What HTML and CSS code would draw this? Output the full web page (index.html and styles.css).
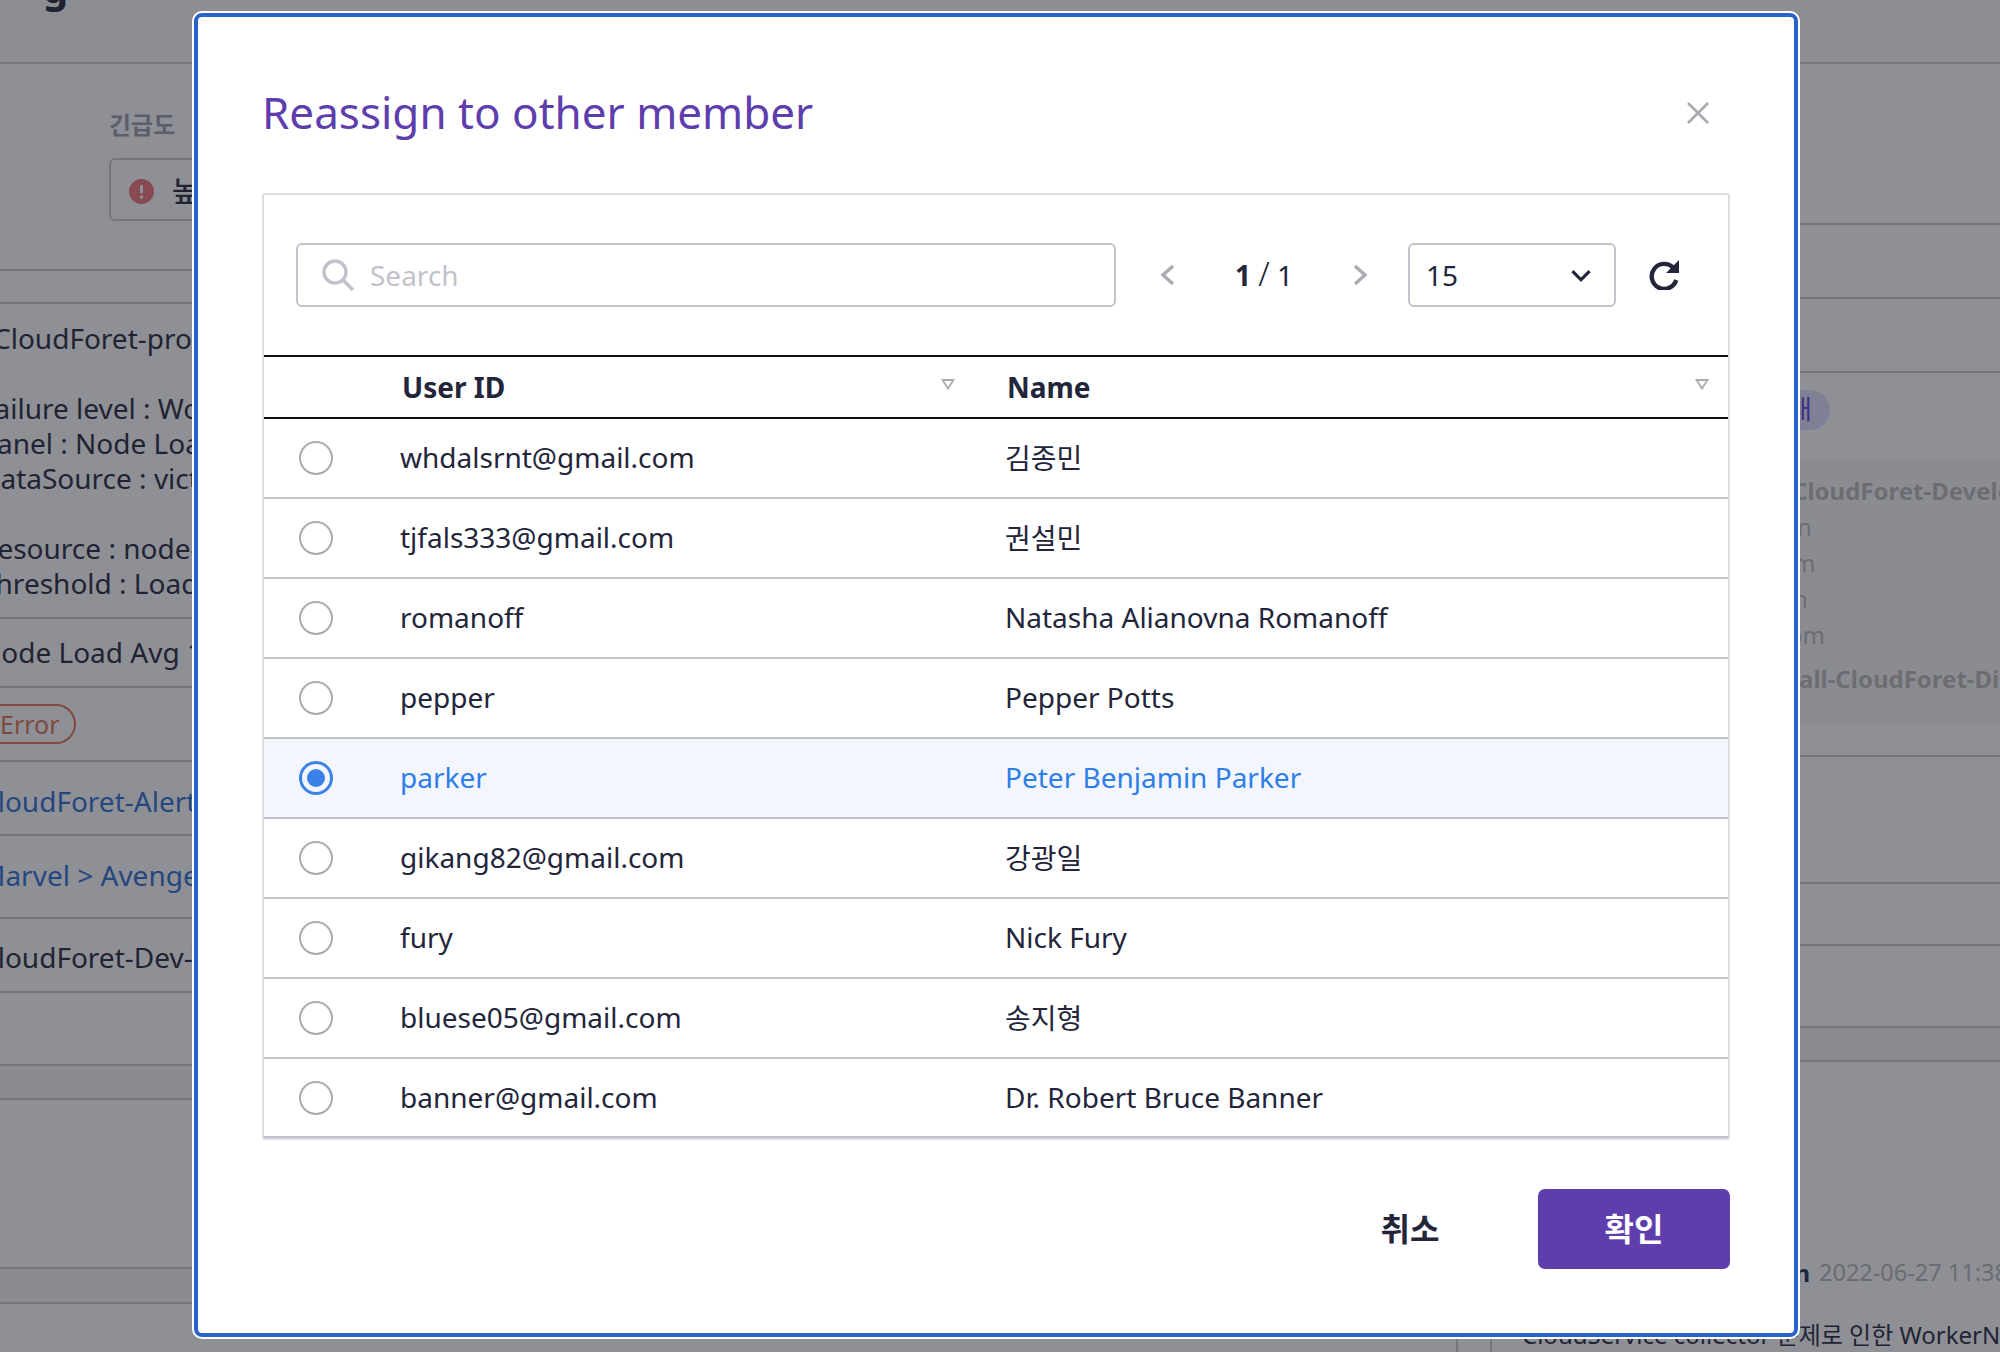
FILE: index.html
```html
<!DOCTYPE html>
<html lang="ko">
<head>
<meta charset="utf-8">
<title>Reassign to other member</title>
<link rel="stylesheet" href="styles.css">
</head>
<body>
<div class="page">
  <header class="page-head">
    <span class="head-g">g</span>
    <span class="head-rest">CloudForet Node Load 1m alert</span>
  </header>
  <div class="page-body">
    <section class="left">
      <div class="urgency">
        <div class="urgency-label">긴급도</div>
        <div class="urgency-box">
          <svg class="urgency-icon" viewBox="0 0 25 25"><circle cx="12.5" cy="12.5" r="12.5" fill="#ee737b"/><rect x="11" y="6" width="3" height="8.5" rx="1.2" fill="#fff"/><circle cx="12.5" cy="18" r="1.7" fill="#fff"/></svg>
          <span class="urgency-text">높음</span>
        </div>
      </div>
      <div class="band band-a"></div>
      <div class="row desc">
        <p class="first">CloudForet-prod</p>
        <p>&nbsp;</p>
        <p class="in">Failure level : Worker</p>
        <p class="in">Panel : Node Load Avg</p>
        <p class="in">DataSource : victoria</p>
        <p>&nbsp;</p>
        <p class="in">Resource : node-exporter</p>
        <p class="in">Threshold : Load Avg</p>
      </div>
      <div class="row r-node in">Node Load Avg 1m</div>
      <div class="row r-error"><span class="badge">Error</span></div>
      <div class="row r-alert in link">CloudForet-Alert</div>
      <div class="row r-marvel in link">Marvel &gt; Avengers</div>
      <div class="row r-dev in">CloudForet-Dev-Team</div>
      <div class="row r-empty"></div>
      <div class="band band-b"></div>
      <div class="row r-tall"></div>
      <div class="band band-c"></div>
    </section>
    <div class="gutter"></div>
    <section class="right">
      <div class="row-r h161"></div>
      <div class="row-r h74"></div>
      <div class="row-r h74"></div>
      <div class="row-r h384">
        <div class="pill">대</div>
        <div class="panel">
          <div class="panel-bold">CloudForet-Develop</div>
          <div class="frag f1">n</div>
          <div class="frag f2">m</div>
          <div class="frag f3">n</div>
          <div class="frag f4">om</div>
          <div class="panel-bold alt">all-CloudForet-Di</div>
        </div>
      </div>
      <div class="row-r h127"></div>
      <div class="row-r h62"></div>
      <div class="row-r h82"></div>
      <div class="band-r"></div>
      <div class="comment">
        <div class="comment-head"><span class="comment-name">admin</span><span class="comment-date">2022-06-27 11:38:00</span></div>
        <div class="comment-body">CloudService collector 문제로 인한 WorkerNode</div>
      </div>
    </section>
  </div>
</div>
<div class="scrim"></div>
<div class="modal" role="dialog">
  <div class="modal-head">
    <h2 class="modal-title">Reassign to other member</h2>
    <svg class="close" viewBox="0 0 24 24"><path d="M2 2 22 22M22 2 2 22" fill="none" stroke="#a9abb3" stroke-width="2.6"/></svg>
  </div>
  <div class="table-box">
    <div class="toolbar">
      <div class="search">
        <svg class="search-icon" viewBox="0 0 32 32"><circle cx="13" cy="13" r="11" fill="none" stroke="#c1c2ca" stroke-width="3.4"/><path d="M21 21 31 31" stroke="#c1c2ca" stroke-width="3.6" fill="none"/></svg>
        <span class="search-text">Search</span>
      </div>
      <div class="pager">
        <svg class="chev" viewBox="0 0 24 24"><path d="M17 3 7 12 17 21" fill="none" stroke="#a9abb3" stroke-width="3.4"/></svg>
        <div class="pager-text"><b>1</b> <span class="slash">/</span> 1</div>
        <svg class="chev" viewBox="0 0 24 24"><path d="M7 3 17 12 7 21" fill="none" stroke="#a9abb3" stroke-width="3.4"/></svg>
      </div>
      <div class="select">
        <span>15</span>
        <svg class="select-chev" viewBox="0 0 20 14"><path d="M2 3 10 11 18 3" fill="none" stroke="#23253a" stroke-width="3"/></svg>
      </div>
      <svg class="refresh" viewBox="0 0 30 30"><path d="M24.5 8A12.5 12.5 0 1 0 27.2 20" fill="none" stroke="#23253a" stroke-width="4.4"/><path d="M30 0V13H17Z" fill="#23253a"/></svg>
    </div>
    <div class="thead">
      <div></div>
      <div class="th"><span>User ID</span><svg class="sort" viewBox="0 0 14 11"><path d="M1.5 1H12.500L7 9.500Z" fill="none" stroke="#a9abb3" stroke-width="1.8"/></svg></div>
      <div class="th th-name"><span>Name</span><svg class="sort" viewBox="0 0 14 11"><path d="M1.5 1H12.500L7 9.500Z" fill="none" stroke="#a9abb3" stroke-width="1.8"/></svg></div>
    </div>
    <div class="tr"><div class="cell-radio"><i class="radio"></i></div><div class="cell">whdalsrnt@gmail.com</div><div class="cell">김종민</div></div>
    <div class="tr"><div class="cell-radio"><i class="radio"></i></div><div class="cell">tjfals333@gmail.com</div><div class="cell">권설민</div></div>
    <div class="tr"><div class="cell-radio"><i class="radio"></i></div><div class="cell">romanoff</div><div class="cell">Natasha Alianovna Romanoff</div></div>
    <div class="tr"><div class="cell-radio"><i class="radio"></i></div><div class="cell">pepper</div><div class="cell">Pepper Potts</div></div>
    <div class="tr selected"><div class="cell-radio"><i class="radio on"></i></div><div class="cell">parker</div><div class="cell">Peter Benjamin Parker</div></div>
    <div class="tr"><div class="cell-radio"><i class="radio"></i></div><div class="cell">gikang82@gmail.com</div><div class="cell">강광일</div></div>
    <div class="tr"><div class="cell-radio"><i class="radio"></i></div><div class="cell">fury</div><div class="cell">Nick Fury</div></div>
    <div class="tr"><div class="cell-radio"><i class="radio"></i></div><div class="cell">bluese05@gmail.com</div><div class="cell">송지형</div></div>
    <div class="tr last"><div class="cell-radio"><i class="radio"></i></div><div class="cell">banner@gmail.com</div><div class="cell">Dr. Robert Bruce Banner</div></div>
  </div>
  <div class="modal-foot">
    <button class="btn cancel">취소</button>
    <button class="btn confirm">확인</button>
  </div>
</div>
</body>
</html>
```
FILE: styles.css
```css
* { box-sizing: border-box; }
html, body { margin: 0; padding: 0; height: 100%; }
body {
  width: 2000px; height: 1352px; overflow: hidden; position: relative;
  background: #fff; color: #23253a;
  font-family: "Noto Sans", "Noto Sans CJK KR", sans-serif; font-size: 28px;
}
.page { width: 2000px; height: 1352px; overflow: hidden; display: flex; flex-direction: column; }
.page-head {
  height: 64px; flex: none; overflow: hidden; display: flex; align-items: flex-end;
  background: #fafafb; border-bottom: 2px solid #c8c9cf; padding-left: 43px;
}
.head-g { font-size: 40px; font-weight: 700; line-height: 40px; margin-bottom: 54px; }
.head-rest { font-size: 40px; line-height: 40px; margin-bottom: 57px; margin-left: 182px; white-space: nowrap; font-weight: 700; }
.page-body { flex: 1; display: flex; min-height: 0; }
.left { width: 1456px; flex: none; overflow: hidden; }
.urgency { height: 207px; padding: 44px 0 0 109px; border-bottom: 2px solid #c8c9cf; }
.urgency-label { font-size: 24px; line-height: 34px; font-weight: 700; color: #999bad; margin-bottom: 16px; }
.urgency-box { width: 400px; height: 63px; display: flex; align-items: center; padding-left: 18px; border: 2px solid #c8c9cf; border-radius: 6px; }
.urgency-icon { width: 25px; height: 25px; margin: 4px 18px 0 0; }
.urgency-text { font-weight: 500; }
.band { background: #f7f7f9; border-bottom: 2px solid #c8c9cf; }
.band-a { height: 33px; background: #fff; }
.band-b { height: 34px; }
.band-c { height: 35px; }
.row { display: flex; align-items: center; border-bottom: 2px solid #c8c9cf; white-space: nowrap; }
.row.in, .desc .in { text-indent: -20px; }
.desc { display: block; height: 315px; padding-top: 17px; line-height: 35px; }
.desc p { margin: 0; }
.desc .first { text-indent: -7px; }
.r-node { height: 69px; padding-bottom: 2px; }
.r-error { height: 74px; }
.r-alert { height: 74px; padding-top: 5px; }
.r-marvel { height: 83px; padding-bottom: 3px; }
.r-dev { height: 74px; padding-top: 4px; }
.r-empty { height: 73px; }
.r-tall { height: 169px; }
.link { color: #2b6dd3; }
.badge { height: 40px; display: flex; align-items: center; margin-left: -20px; padding: 0 14px 0 18px; border: 2px solid #dd7252; border-radius: 20px; color: #dd7252; font-size: 25px; }
.gutter { width: 34px; flex: none; border-left: 2px solid #c8c9cf; }
.right { flex: 1; border-left: 2px solid #c8c9cf; overflow: hidden; white-space: nowrap; }
.row-r { border-bottom: 2px solid #c8c9cf; }
.h161 { height: 161px; }
.h74 { height: 74px; }
.h384 { height: 384px; padding-top: 17px; }
.h127 { height: 127px; }
.h62 { height: 62px; }
.h82 { height: 82px; }
.pill { width: 200px; height: 40px; margin-left: 138px; padding-right: 18px; text-align: right; line-height: 38px; border-radius: 20px; background: #dfddff; color: #5b3dd5; font-size: 26px; }
.panel { margin-top: 28px; height: 265px; background: #f7f7f9; padding-top: 15px; font-size: 24px; line-height: 36px; color: #b9b8bb; }
.panel-bold { font-weight: 700; margin-left: 300px; }
.panel-bold.alt { margin-left: 307px; margin-top: 8px; }
.f1 { margin-left: 305px; }
.f2 { margin-left: 301px; }
.f3 { margin-left: 301px; }
.f4 { margin-left: 296px; }
.band-r { height: 34px; background: #f7f7f9; border-bottom: 2px solid #c8c9cf; }
.comment { padding: 192px 0 0 30px; }
.comment-head { display: flex; align-items: center; height: 36px; font-size: 24px; }
.comment-name { flex: none; width: 288px; text-align: right; font-weight: 700; color: #1a2d58; }
.comment-date { flex: none; margin-left: 9px; color: #b5b6bb; font-size: 23.5px; }
.comment-body { margin-top: 25px; line-height: 40px; font-size: 24px; }
.scrim { position: absolute; inset: 0; background: rgba(31, 33, 43, .5); }
.modal {
  position: absolute; left: 194px; top: 13px; width: 1604px; height: 1324px;
  background: #fff; border: 4px solid #2864c8; border-radius: 8px; box-shadow: 0 0 0 2px #fff;
  padding: 0 64px;
}
.modal-head { height: 176px; padding-top: 65px; display: flex; justify-content: space-between; }
.modal-title { margin: 0; font-size: 44px; line-height: 60px; font-weight: 400; color: #5e3dad; }
.close { width: 24px; height: 24px; margin: 19px 20px 0 0; }
.table-box { width: 1468px; height: 947px; border: 2px solid #dcdde2; border-radius: 3px; }
.toolbar { height: 160px; display: flex; align-items: center; padding: 0 0 0 32px; }
.search { width: 820px; height: 64px; display: flex; align-items: center; border: 2px solid #c1c2ca; border-radius: 6px; padding-left: 24px; }
.search-icon { width: 32px; height: 32px; margin-right: 16px; }
.search-text { color: #c1c2ca; }
.pager { display: flex; align-items: center; margin: 0 36px 0 40px; }
.chev { width: 24px; height: 24px; }
.pager-text { width: 168px; text-align: center; line-height: 34px; }
.slash { font-size: 33px; font-weight: 300; line-height: 28px; }
.select { width: 208px; height: 64px; display: flex; align-items: center; justify-content: space-between; border: 2px solid #c1c2ca; border-radius: 6px; padding: 0 22px 0 16px; }
.select-chev { width: 22px; height: 15px; }
.refresh { width: 30px; height: 30px; margin-left: 33px; }
.thead, .tr { display: grid; grid-template-columns: 136px 605px 1fr; align-items: center; }
.thead { height: 64px; border-top: 2px solid #0e0e14; border-bottom: 2px solid #0e0e14; font-weight: 700; }
.th { display: flex; justify-content: space-between; align-items: center; padding-left: 2px; padding-right: 50px; }
.th-name { padding-left: 2px; padding-right: 19px; }
.sort { width: 14px; height: 11px; margin-top: -6px; }
.tr { height: 80px; border-bottom: 2px solid #c1c2ca; }
.tr.last { height: 79px; }
.cell { padding-bottom: 2px; }
.cell-radio { display: flex; padding-left: 35px; }
.radio { display: block; width: 34px; height: 34px; border: 2px solid #a9abb3; border-radius: 50%; background: #fff; }
.radio.on { border: 3px solid #3b82e6; padding: 5px; background: #3b82e6 content-box; }
.selected { background: #f3f6fd; color: #2d7ee8; }
.modal-foot { display: flex; justify-content: flex-end; align-items: center; margin-top: 49px; }
.btn { height: 80px; width: 192px; border: 0; border-radius: 7px; font: 700 32px "Noto Sans CJK KR", "Noto Sans", sans-serif; color: #23253a; background: none; padding: 0 0 5px; }
.cancel { margin-right: 32px; }
.confirm { background: #5e3dad; color: #fff; }
```
